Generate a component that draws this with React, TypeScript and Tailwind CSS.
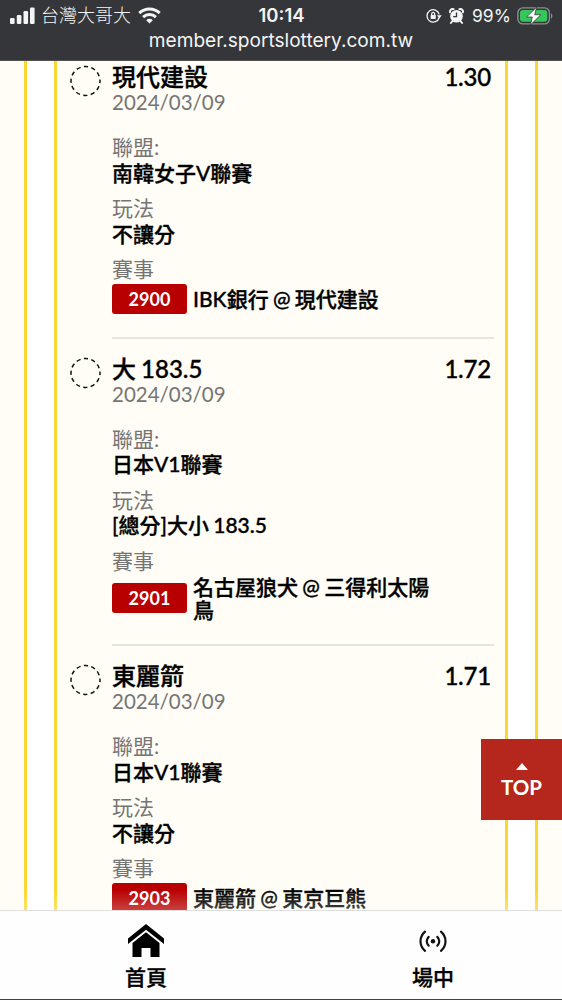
import React from 'react'

interface Bet {
  title: string
  odds: string
  date: string
  league: string
  play: string
  code: string
  match: string
}

const bets: Bet[] = [
  { title: '現代建設', odds: '1.30', date: '2024/03/09', league: '南韓女子V聯賽', play: '不讓分', code: '2900', match: 'IBK銀行 @ 現代建設' },
  { title: '大 183.5', odds: '1.72', date: '2024/03/09', league: '日本V1聯賽', play: '[總分]大小 183.5', code: '2901', match: '名古屋狼犬 @ 三得利太陽鳥' },
  { title: '東麗箭', odds: '1.71', date: '2024/03/09', league: '日本V1聯賽', play: '不讓分', code: '2903', match: '東麗箭 @ 東京巨熊' }
]

const StatusBar: React.FC = () => (
  <header className="h-[61px] shrink-0 bg-[#343639] border-b border-[#55504c] text-[#f4f4f4] font-['Inter','Noto_Sans_CJK_TC',sans-serif]">
    <div className="grid grid-cols-[1fr_auto_1fr] items-center h-[31px] pl-[10px] pr-[9px]">
      <div className="flex items-center">
        <svg className="w-[25px] h-[17px]" viewBox="0 0 25 17" fill="currentColor">
          <rect x="0" y="11" width="4.6" height="6" rx="1.2" />
          <rect x="6.8" y="8" width="4.6" height="9" rx="1.2" />
          <rect x="13.5" y="4" width="4.6" height="13" rx="1.2" />
          <rect x="20" y="0.5" width="4.6" height="16.5" rx="1.2" />
        </svg>
        <span className="ml-1.5 text-[18px] leading-[31px] font-light">台灣大哥大</span>
        <svg className="ml-[7px] w-[23px] h-[17px]" viewBox="0 0 23 17" fill="none" stroke="currentColor" strokeWidth="3">
          <path d="M1.3 6.2a14.7 14.7 0 0 1 20.4 0" />
          <path d="M5.1 10.2a9.2 9.2 0 0 1 12.8 0" />
          <path d="M11.5 16.5 8.2 13.2a4.7 4.7 0 0 1 6.6 0z" fill="currentColor" stroke="none" />
        </svg>
      </div>
      <span className="text-[18.5px] font-semibold leading-[31px]">10:14</span>
      <div className="flex items-center justify-end">
        <svg className="w-4 h-4" viewBox="0 0 16 16" fill="none" stroke="currentColor" strokeWidth="1.3">
          <path d="M13.2 9.5a6.2 6.2 0 1 1 0-3.2" />
          <path d="M10.8 7.2h5L13.4 10.4z" fill="currentColor" stroke="none" />
          <rect x="4.6" y="7" width="5.2" height="4" rx=".7" fill="currentColor" stroke="none" />
          <path d="M5.7 7.2V5.9a1.5 1.5 0 0 1 3 0v1.3" />
        </svg>
        <svg className="ml-[7px] w-[15px] h-4" viewBox="0 0 15 16">
          <circle cx="7.5" cy="8.3" r="6.3" fill="currentColor" />
          <path d="M1 4.4A2.8 2.8 0 0 1 4.6 1.1M14 4.4a2.8 2.8 0 0 0-3.6-3.3M3.4 13.2 1.9 15M11.6 13.2l1.5 1.8" stroke="currentColor" strokeWidth="1.9" fill="none" strokeLinecap="round" />
          <path d="M7.5 4.5v4.2H4.2" stroke="#343639" strokeWidth="1.3" fill="none" />
        </svg>
        <span className="ml-2 w-[38px] text-[17.5px] whitespace-nowrap leading-[31px]">99%</span>
        <svg className="ml-[7px] w-[36px] h-[18px]" viewBox="0 0 36 18">
          <rect x=".9" y=".9" width="31.5" height="16" rx="5" fill="none" stroke="#8d8e90" strokeWidth="1.4" />
          <rect x="3" y="3" width="27.3" height="11.8" rx="3" fill="#35c759" />
          <path d="M34 6.2c1.8.6 1.8 4.8 0 5.4z" fill="#8d8e90" />
          <path d="M19.7 0 9.5 10h5.8L13.4 18 23.8 7.7h-6.1z" fill="#fff" stroke="#343639" strokeWidth=".8" />
        </svg>
      </div>
    </div>
    <div className="text-center text-[19.1px] leading-[18px]">member.sportslottery.com.tw</div>
  </header>
)

const Field: React.FC<{ label: string; value?: string }> = ({ label, value }) => (
  <div className="text-[21px] leading-[25.5px]">
    <div className="text-[#757575]">{label}</div>
    {value && <div className="font-medium [word-spacing:-1px] [-webkit-text-stroke:0.35px_#000]">{value}</div>}
  </div>
)

const BetItem: React.FC<{ bet: Bet }> = ({ bet }) => (
  <div className="flex pl-[13px] pr-[11px]">
    <svg className="mt-[18px] mr-[11px] w-[31px] h-8 shrink-0" viewBox="0 0 31 32" fill="none">
      <circle cx="15.5" cy="16" r="14.5" stroke="#111" strokeWidth="1.5" strokeDasharray="4.3 3.292" strokeDashoffset="2.15" />
    </svg>
    <div className="flex-1 border-b-2 border-[#e6e4de] pt-[17px] pb-[23px]">
      <div className="flex justify-between pr-[3px] text-2xl leading-[26px] font-medium [word-spacing:-1px] [-webkit-text-stroke:0.35px_#000]">
        <span>{bet.title}</span>
        <span className="tracking-[-0.2px]">{bet.odds}</span>
      </div>
      <div className="text-[20.5px] leading-[25px] text-[#757575]">{bet.date}</div>
      <div className="mt-[19px] flex flex-col gap-2.5">
        <Field label="聯盟:" value={bet.league} />
        <Field label="玩法" value={bet.play} />
        <Field label="賽事" />
      </div>
      <div className="mt-0.5 flex items-center text-[21px] font-medium">
        <div className="w-[75px] h-[30px] shrink-0 rounded-[3px] bg-[#b90000] text-white text-center text-[18px] leading-[30px] font-bold">{bet.code}</div>
        <div className="ml-1.5 w-[240px] leading-[23px] [word-spacing:-1px] [-webkit-text-stroke:0.35px_#000]">{bet.match}</div>
      </div>
    </div>
  </div>
)

const BottomNav: React.FC = () => (
  <nav className="h-[90px] shrink-0 grid grid-cols-[292px_1fr] bg-[#fefefe] border-t border-t-[#dededc] border-b border-b-[#444] text-[21px] font-medium leading-6">
    <div className="flex flex-col items-center pt-[13px]">
      <svg className="w-9 h-[34px]" viewBox="0 0 36 34" fill="#000">
        <path d="M0 14.5 18 0l18 14.5V20L18 5.7 0 20z" />
        <path d="M4.5 19 18 8.3 31.5 19v14H22.5v-9h-9v9h-9z" />
      </svg>
      <span className="mt-[7px] [-webkit-text-stroke:0.35px_#000]">首頁</span>
    </div>
    <div className="flex flex-col items-center pl-3 pt-[13px]">
      <svg className="w-7 h-[34px]" viewBox="0 0 28 34" fill="none" stroke="#111" strokeWidth="2.2" strokeLinecap="round">
        <circle cx="14" cy="17.3" r="2.2" fill="#111" stroke="none" />
        <path d="M9.7 12.9c-2.6 2.5-2.6 6.3 0 8.8M18.3 12.9c2.6 2.5 2.6 6.3 0 8.8M6 7.7c-6 5.2-6 14 0 19.2M22 7.7c6 5.2 6 14 0 19.2" />
      </svg>
      <span className="mt-[7px] [-webkit-text-stroke:0.35px_#000]">場中</span>
    </div>
  </nav>
)

const App: React.FC = () => {
  return (
    <div className="relative w-[562px] h-[1000px] overflow-hidden flex flex-col bg-white text-black font-['Lato','Noto_Sans_CJK_TC',sans-serif]">
      <StatusBar />
      <main className="relative flex-1 min-h-0 flex overflow-hidden">
        <div className="w-[27px] shrink-0 bg-[#fffdf5] border-r-[3px] border-[#fbd734]" />
        <div className="mx-[27px] w-[454px] shrink-0 bg-[#fffdf5] border-x-[3px] border-[#fbd734]">
          <div className="-mt-[14px]">
            {bets.map((bet) => (
              <BetItem key={bet.code} bet={bet} />
            ))}
          </div>
        </div>
        <div className="w-[27px] shrink-0 bg-[#fffdf5] border-l-[3px] border-[#fbd734]" />
        {/* soft shade above the bottom nav */}
        <div className="absolute inset-x-0 bottom-0 h-5 bg-gradient-to-b from-white/0 to-white/25" />
      </main>
      <BottomNav />
      <button type="button" className="absolute right-0 top-[739px] w-[81px] h-[81px] bg-[#b5261c] text-white flex flex-col items-center pt-6">
        <svg className="w-3 h-[7px]" viewBox="0 0 12 7" fill="currentColor">
          <path d="M0 7 6 0l6 7z" />
        </svg>
        <span className="mt-1 text-[20.5px] leading-[26px] font-bold">TOP</span>
      </button>
    </div>
  )
}

export default App
